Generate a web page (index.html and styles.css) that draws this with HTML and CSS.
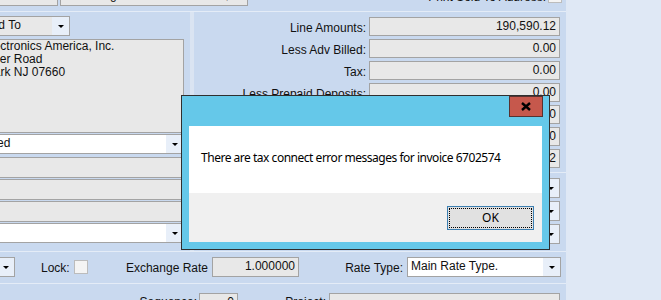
FILE: index.html
```html
<!DOCTYPE html>
<html>
<head>
    <title>Invoice Totals</title>
    <link rel="stylesheet" href="styles.css">
</head>
<body>
<div class="app">
    <div class="top-strip">
        <div class="field top-a"></div>
        <div class="field top-name">Samsung Electronics America, Inc.</div>
        <span class="lbl print-lbl">Print Sold To Address:</span>
        <span class="check top-check"></span>
    </div>
    <div class="hsep"></div>

    <div class="main">
        <div class="left-col">
            <div class="left-inner">
                <div class="combo combo-ro combo-sold">
                    <span class="combo-text">Sold To</span><span class="combo-btn"></span>
                </div>
                <div class="address">Samsung Electronics America, Inc.<br>105 Challenger Road<br>Ridgefield Park NJ 07660</div>
                <div class="combo combo-left">
                    <span class="combo-text">Approved</span><span class="combo-btn"></span>
                </div>
                <div class="field left-field first"></div>
                <div class="field left-field"></div>
                <div class="field left-field"></div>
                <div class="combo combo-left">
                    <span class="combo-text"></span><span class="combo-btn"></span>
                </div>
            </div>
        </div>
        <div class="vsep"></div>
        <div class="right-col">
            <div class="totals">
                <div class="total-row"><span class="lbl">Line Amounts:</span><div class="field num">190,590.12</div></div>
                <div class="total-row"><span class="lbl">Less Adv Billed:</span><div class="field num">0.00</div></div>
                <div class="total-row"><span class="lbl">Tax:</span><div class="field num">0.00</div></div>
                <div class="total-row"><span class="lbl">Less Prepaid Deposits:</span><div class="field num">0.00</div></div>
                <div class="total-row"><span class="lbl">Less Retention:</span><div class="field num">0.00</div></div>
                <div class="total-row"><span class="lbl">Freight:</span><div class="field num">0.00</div></div>
                <div class="total-row"><span class="lbl">Invoice Total:</span><div class="field num">190,590.12</div></div>
            </div>
            <div class="hsep"></div>
            <div class="selects">
                <div class="select-row"><span class="lbl">Terms:</span><div class="combo combo-right"><span class="combo-text">Net 30</span><span class="combo-btn"></span></div></div>
                <div class="select-row"><span class="lbl">Currency:</span><div class="combo combo-right"><span class="combo-text">USD</span><span class="combo-btn"></span></div></div>
                <div class="select-row"><span class="lbl">Tax Code:</span><div class="combo combo-right"><span class="combo-text">Exempt</span><span class="combo-btn"></span></div></div>
            </div>
        </div>
    </div>

    <div class="hsep"></div>
    <div class="rate-row">
        <div class="combo combo-small"><span class="combo-text"></span><span class="combo-btn"></span></div>
        <span class="lbl lbl-lock">Lock:</span>
        <span class="check lock-check"></span>
        <span class="lbl lbl-rate">Exchange Rate</span>
        <div class="field num rate-field">1.000000</div>
        <span class="lbl lbl-type">Rate Type:</span>
        <div class="combo combo-type"><span class="combo-text">Main Rate Type.</span><span class="combo-btn"></span></div>
    </div>
    <div class="hsep"></div>
    <div class="bottom-row">
        <span class="lbl lbl-seq">Sequence:</span>
        <div class="field num seq-field">0</div>
        <span class="lbl lbl-proj">Project:</span>
        <div class="field proj-field"></div>
    </div>
</div>

<div class="dialog">
    <div class="dialog-title">
        <span class="close-btn">
            <svg width="10" height="9" viewBox="0 0 10 9"><path d="M1 1 L9 8 M9 1 L1 8" stroke="#000" stroke-width="2.4"/></svg>
        </span>
    </div>
    <div class="dialog-body">There are tax connect error messages for invoice 6702574</div>
    <div class="dialog-foot">
        <div class="ok-btn"><span class="ok-focus">OK</span></div>
    </div>
</div>
</body>
</html>
```

FILE: styles.css
```css
* { box-sizing: border-box; }
body {
    margin: 0;
    width: 661px;
    height: 300px;
    overflow: hidden;
    position: relative;
    background: #dfe8f5;
    font-family: "Liberation Sans", Arial, sans-serif;
    font-size: 12px;
    color: #111;
}
.app {
    width: 566px;
    height: 300px;
    background: #c9d9ef;
    overflow: hidden;
}
.hsep { height: 1px; background: #e4ecf7; }
.lbl { white-space: nowrap; line-height: 22px; }

.field {
    height: 19px;
    background: #e8e8e8;
    border: 1px solid #a3a3a3;
    line-height: 16px;
    padding: 0 3px;
    white-space: nowrap;
    overflow: hidden;
}
.num { text-align: right; }
.check {
    width: 14px;
    height: 14px;
    background: #f4f4f4;
    border: 1px solid #bcbcbc;
}

/* combo boxes */
.combo {
    display: flex;
    height: 20px;
    background: #fff;
    border: 1px solid #a3a3a3;
    overflow: hidden;
}
.combo-text { flex: 1; padding-left: 3px; line-height: 17px; white-space: nowrap; }
.combo-btn {
    width: 17px;
    background: #e8eff9;
    display: flex;
    align-items: center;
    justify-content: center;
}
.combo-btn::after {
    content: "";
    border-left: 3px solid transparent;
    border-right: 3px solid transparent;
    border-top: 3px solid #000;
}
.combo-ro { background: #e8e8e8; }

/* top strip */
.top-strip { height: 11px; display: flex; align-items: flex-start; }
.top-a { margin: -14px 0 0 -3px; width: 61px; height: 20px; }
.top-name { margin: -14px 0 0 2px; width: 188px; height: 20px; padding-left: 5px; line-height: 17px; }
.print-lbl { margin: -14px 0 0 0; width: 298px; text-align: right; }
.top-check { margin: -11px 0 0 2px; }

/* middle */
.main { display: flex; height: 239px; }
.left-col { width: 190px; overflow: hidden; }
.left-inner { margin-left: -80px; width: 264px; }
.combo-sold { margin: 4px 0 0 57px; width: 93px; }
.address {
    margin: 3px 0 0 4px;
    width: 260px;
    height: 94px;
    background: #e8e8e8;
    border: 1px solid #a3a3a3;
    padding-left: 4px;
    line-height: 13px;
    white-space: nowrap;
}
.combo-left { margin: 1px 0 0 35px; width: 229px; }
.left-field { margin: 1px 0 0 35px; width: 229px; height: 21px; }
.left-field.first { margin-top: 3px; }

.vsep { width: 4px; background: #dae4f2; }
.right-col { width: 372px; }
.totals { padding: 5px 0 1px; }
.total-row, .select-row { display: flex; height: 22px; }
.total-row .lbl, .select-row .lbl { width: 172px; text-align: right; }
.total-row .field { margin-left: 3px; width: 191px; }
.selects { padding-top: 5px; }
.select-row { height: 23px; }
.combo-right { margin-left: 3px; width: 191px; }

/* exchange rate row */
.rate-row { display: flex; height: 31px; padding-top: 5px; align-items: flex-start; }
.combo-small { margin-left: -30px; width: 45px; }
.lbl-lock { margin-left: 26px; width: 33px; }
.lock-check { margin-top: 3px; }
.lbl-rate { width: 120px; text-align: right; }
.rate-field { margin-left: 4px; width: 87px; height: 20px; line-height: 17px; }
.lbl-type { width: 104px; text-align: right; }
.combo-type { margin-left: 4px; width: 154px; }

/* bottom row */
.bottom-row { display: flex; padding-top: 9px; align-items: flex-start; }
.bottom-row .lbl { line-height: 18px; text-align: right; }
.lbl-seq { width: 197px; }
.seq-field { margin-left: 2px; width: 39px; }
.lbl-proj { width: 88px; }
.proj-field { margin-left: 3px; width: 231px; }

/* message box */
.dialog {
    position: absolute;
    left: 181px;
    top: 95px;
    width: 369px;
    height: 155px;
    background: #65c8e9;
    border: 1px solid #2f2f2f;
    padding: 0 7px 7px;
    font-family: "Noto Sans", "Open Sans", sans-serif;
}
.dialog-title { height: 30px; position: relative; }
.close-btn {
    position: absolute;
    left: 320px;
    top: 0;
    width: 34px;
    height: 21px;
    background: #c6584c;
    border: 1px solid #573230;
    display: flex;
    align-items: center;
    justify-content: center;
}
.dialog-body {
    height: 67px;
    background: #fff;
    padding: 0 0 0 12px;
    font-size: 12px;
    letter-spacing: -0.48px;
    line-height: 64px;
    color: #000;
}
.dialog-foot {
    height: 49px;
    background: #f0f0f0;
    display: flex;
    justify-content: flex-end;
    padding: 13px 8px 0 0;
}
.ok-btn {
    width: 87px;
    height: 24px;
    border: 1px solid #3c7fb1;
    background: #e1e1e1;
    padding: 1px;
}
.ok-focus {
    display: block;
    height: 100%;
    border: 1px dotted #000;
    text-align: center;
    font-size: 12px;
    line-height: 18px;
    color: #000;
}
```
